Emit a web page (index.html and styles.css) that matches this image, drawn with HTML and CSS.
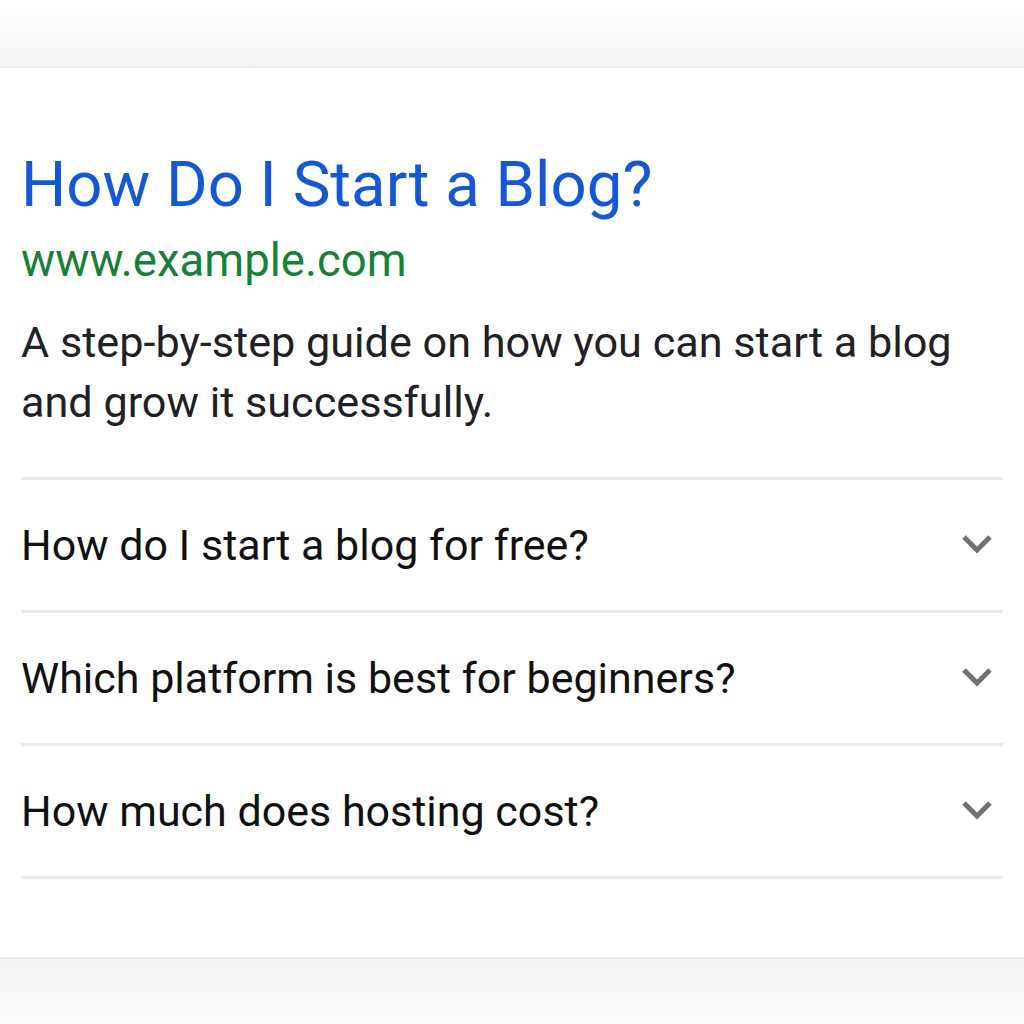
FILE: index.html
```html
<!DOCTYPE html>
<html lang="en">
<head>
<meta charset="utf-8">
<title>How Do I Start a Blog?</title>
<link rel="stylesheet" href="styles.css">
</head>
<body>
<div class="page">
  <header class="topbar"></header>
  <main class="result">
    <h1 class="title">How Do I Start a Blog?</h1>
    <div class="url">www.example.com</div>
    <p class="snippet">A step-by-step guide on how you can start a blog and grow it successfully.</p>
    <ul class="faq">
      <li class="faq-item"><span class="q">How do I start a blog for free?</span>
        <svg class="chev" viewBox="0 0 32 22" width="32" height="22"><path d="M3 3 L16 16 L29 3" fill="none" stroke="#6f7373" stroke-width="5"/></svg></li>
      <li class="faq-item"><span class="q">Which platform is best for beginners?</span>
        <svg class="chev" viewBox="0 0 32 22" width="32" height="22"><path d="M3 3 L16 16 L29 3" fill="none" stroke="#6f7373" stroke-width="5"/></svg></li>
      <li class="faq-item"><span class="q">How much does hosting cost?</span>
        <svg class="chev" viewBox="0 0 32 22" width="32" height="22"><path d="M3 3 L16 16 L29 3" fill="none" stroke="#6f7373" stroke-width="5"/></svg></li>
    </ul>
  </main>
  <footer class="bottombar"></footer>
</div>
</body>
</html>
```

FILE: styles.css
```css
* { box-sizing: border-box; }
html, body { margin: 0; padding: 0; background: #ffffff; }
body { font-family: Roboto, "Open Sans", Arial, sans-serif; color: #202124; }
.page { height: 1024px; display: flex; flex-direction: column; }
.topbar {
  height: 68px;
  flex: none;
  background: linear-gradient(#ffffff, #f6f6f6);
  border-bottom: 2px solid #ececec;
}
.result {
  flex: 1;
  padding: 81px 21px 0 21px;
}
.title {
  margin: 0;
  font-weight: 400;
  font-size: 63.5px;
  line-height: 72px;
  color: #1558d6;
}
.url {
  margin-top: 12px;
  font-size: 45.5px;
  line-height: 56px;
  color: #188038;
}
.snippet {
  margin: 24px 0 0 0;
  font-size: 43.2px;
  line-height: 60px;
  color: #202124;
}
.faq {
  list-style: none;
  margin: 44px 0 0 0;
  padding: 0;
  border-top: 3px solid #ebebeb;
}
.faq-item {
  height: 133px;
  display: flex;
  align-items: center;
  justify-content: space-between;
  border-bottom: 3px solid #ebebeb;
  padding-right: 10px;
}
.q { font-size: 43px; color: #111; }
.chev { flex: none; }
.bottombar {
  height: 67px;
  flex: none;
  background: linear-gradient(#f5f5f5, #fbfbfb);
  border-top: 2px solid #ececec;
}
```
